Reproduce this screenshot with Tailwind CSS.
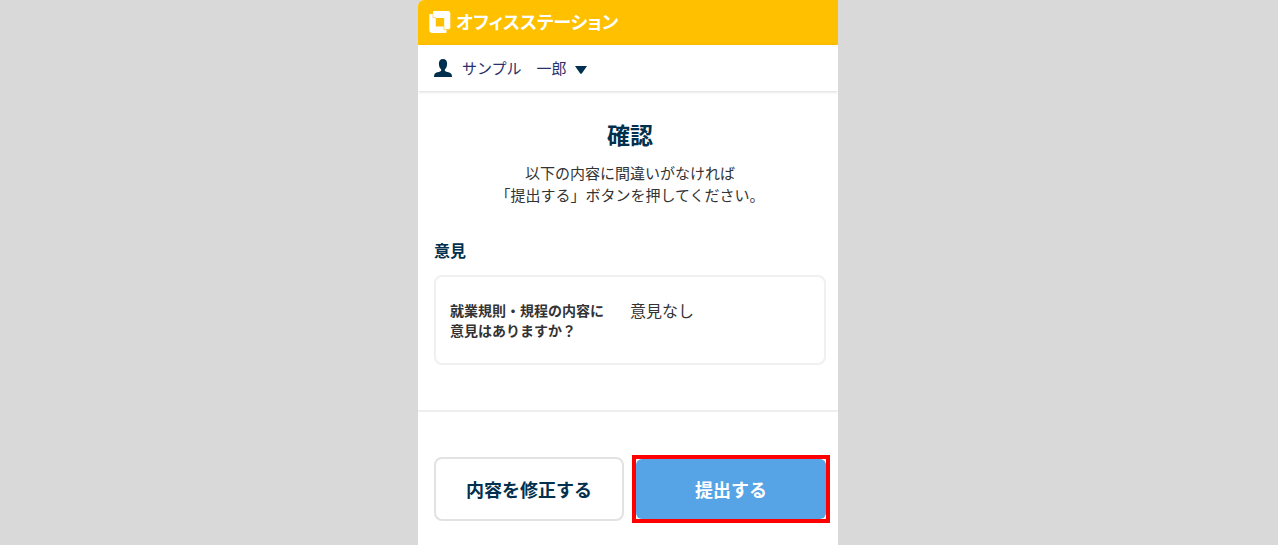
<!DOCTYPE html>
<html lang="ja">
<head>
<meta charset="utf-8">
<meta name="viewport" content="width=device-width, initial-scale=1">
<title>確認</title>
<script src="https://cdn.jsdelivr.net/npm/@tailwindcss/browser@4"></script>
</head>
<body class="bg-[#d9d9d9] pr-[22px] font-['Noto_Sans_CJK_JP',sans-serif] text-[#333]">
<div class="mx-auto min-h-screen max-w-[420px] overflow-hidden rounded-tl-md bg-white">
  <header>
    <div class="flex h-[45px] items-center gap-1 bg-[#ffc000] pb-1 pl-[10px]">
      <svg class="mt-[3px] size-6" viewBox="0 0 24 24" aria-hidden="true">
        <path fill="#fff" fill-rule="evenodd" d="M6 1H20Q22.300 1 22.300 3.300V17.500Q22.300 19.300 20.500 19.300H18.500V22Q18.500 23 17.500 23H4.500Q1.300 23 1.300 19.800V5Q1.300 4 2.300 4H5V2Q5 1 6 1ZM7.800 8V16.500H16.200V8Z"/>
        <path fill="none" stroke="#ffc000" stroke-opacity=".7" stroke-width=".8" d="M5 3.800V7.600H8M18.700 19.600H16V16.500"/>
      </svg>
      <span class="text-lg leading-6 font-bold text-white [font-feature-settings:'palt']">オフィスステーション</span>
    </div>
    <div class="flex h-[46px] items-center pl-4 shadow-[0_1px_3px_#00000026]">
      <button type="button" class="flex items-center text-[15px] leading-6 text-[#2a2f6b]">
        <svg class="mr-[10px] h-[18px] w-[18px]" viewBox="0 0 18 18" aria-hidden="true">
          <path fill="#00304d" d="M9 0C6.300 0 4.900 1.800 4.900 4.500C4.900 7 5.600 9.200 7.100 10.300V12C5.500 13 1.500 13.300.6 15Q0 16.200 0 18H18Q18 16.200 17.400 15C16.500 13.300 12.500 13 10.900 12V10.300C12.400 9.200 13.100 7 13.100 4.500C13.100 1.800 11.700 0 9 0Z"/>
        </svg>
        サンプル　一郎
        <svg class="mt-1 ml-2 h-2 w-3" viewBox="0 0 12 8" aria-hidden="true"><path fill="#00304d" d="M0 0H12L6.800 7.400Q6 8.300 5.200 7.400Z"/></svg>
      </button>
    </div>
  </header>
  <main>
    <div class="pt-[27px] pr-3 pb-[45px] pl-4">
      <h1 class="text-center text-[23px] leading-8 font-bold text-[#00304d]">確認</h1>
      <p class="mt-3 text-center text-[15px] leading-[22px]">以下の内容に間違いがなければ<br>「提出する」ボタンを押してください。</p>
      <h2 class="mt-8 text-base leading-6 font-bold text-[#00304d]">意見</h2>
      <dl class="mt-[13px] flex rounded-lg border-2 border-[#f0f0f0] px-[14px] py-[23px]">
        <dt class="w-[180px] text-sm leading-5 font-bold">就業規則・規程の内容に<br>意見はありますか？</dt>
        <dd class="text-base leading-5">意見なし</dd>
      </dl>
    </div>
    <div class="flex gap-2 border-t-2 border-[#eeeeee] pt-[43px] pr-2 pb-5 pl-4">
      <button type="button" class="my-[2px] h-16 flex-1 rounded-lg border-2 border-[#e2e2e2] text-lg font-bold text-[#00304d]">内容を修正する</button>
      <div class="w-[198px] border-4 border-[#ff0000]">
        <button type="button" class="h-full w-full rounded-md bg-[#56a3e6] text-lg font-bold text-white">提出する</button>
      </div>
    </div>
  </main>
</div>
</body>
</html>
